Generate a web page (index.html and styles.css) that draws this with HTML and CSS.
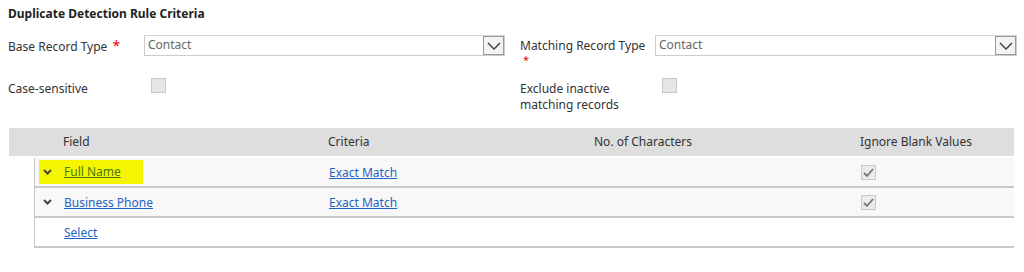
FILE: index.html
```html
<!DOCTYPE html>
<html lang="en">
<head>
  <meta charset="UTF-8">
  <title>Duplicate Detection Rule Criteria</title>
  <link rel="stylesheet" href="styles.css">
</head>
<body>
  <div class="page">
    <h2 class="title">Duplicate Detection Rule Criteria</h2>

    <div class="form-grid">
      <div class="field-label">Base Record Type <span class="req">*</span></div>
      <div class="select-box">
        <span class="select-value">Contact</span>
        <span class="select-btn">
          <svg width="14" height="8" viewBox="0 0 14 8"><path d="M1 1 L7 7 L13 1" fill="none" stroke="#444" stroke-width="1.5"/></svg>
        </span>
      </div>
      <div class="field-label right">Matching Record Type<span class="req req-below">*</span></div>
      <div class="select-box">
        <span class="select-value">Contact</span>
        <span class="select-btn">
          <svg width="14" height="8" viewBox="0 0 14 8"><path d="M1 1 L7 7 L13 1" fill="none" stroke="#444" stroke-width="1.5"/></svg>
        </span>
      </div>

      <div class="field-label">Case-sensitive</div>
      <div class="check-cell"><span class="checkbox"></span></div>
      <div class="field-label right">Exclude inactive<br>matching records</div>
      <div class="check-cell"><span class="checkbox"></span></div>
    </div>

    <div class="grid">
      <div class="grid-head">
        <div></div>
        <div>Field</div>
        <div>Criteria</div>
        <div>No. of Characters</div>
        <div>Ignore Blank Values</div>
      </div>
      <div class="grid-row">
        <div class="chev"><svg width="9" height="6" viewBox="0 0 9 6"><path d="M1 1 L4.5 4.5 L8 1" fill="none" stroke="#444" stroke-width="2"/></svg></div>
        <div><a href="#" class="link highlight">Full Name</a></div>
        <div><a href="#" class="link">Exact Match</a></div>
        <div></div>
        <div><span class="checkbox checked"><svg width="11" height="9" viewBox="0 0 11 9"><path d="M1 5 L4 8 L10 1" fill="none" stroke="#777" stroke-width="1.8"/></svg></span></div>
      </div>
      <div class="grid-row">
        <div class="chev"><svg width="9" height="6" viewBox="0 0 9 6"><path d="M1 1 L4.5 4.5 L8 1" fill="none" stroke="#444" stroke-width="2"/></svg></div>
        <div><a href="#" class="link">Business Phone</a></div>
        <div><a href="#" class="link">Exact Match</a></div>
        <div></div>
        <div><span class="checkbox checked"><svg width="11" height="9" viewBox="0 0 11 9"><path d="M1 5 L4 8 L10 1" fill="none" stroke="#777" stroke-width="1.8"/></svg></span></div>
      </div>
      <div class="grid-row last">
        <div></div>
        <div><a href="#" class="link">Select</a></div>
        <div></div>
        <div></div>
        <div></div>
      </div>
    </div>
  </div>
</body>
</html>
```

FILE: styles.css
```css
body {
  margin: 0;
  padding: 0;
  font-family: "Noto Sans", "Open Sans", sans-serif;
  font-size: 12px;
  color: #333;
  background-color: white;
}
.page {
  padding: 5px 7px 0 8px;
}
.title {
  font-size: 12px;
  font-weight: bold;
  color: #222;
  margin: 0 0 13px 0;
  line-height: 17px;
}
.form-grid {
  display: grid;
  grid-template-columns: 136px 361px 15px 135px 362px;
  grid-template-rows: 43px 50px;
}
.form-grid .field-label.right {
  grid-column: 4;
}
.form-grid .select-box:nth-child(4) {
  grid-column: 5;
}
.form-grid .check-cell:last-child {
  grid-column: 5;
}
.field-label {
  line-height: 16px;
  padding-top: 3px;
  color: #333;
}
.req {
  color: #e00;
  font-size: 14px;
  margin-left: 2px;
}
.req-below {
  display: block;
  font-size: 11px;
  line-height: 12px;
  margin-left: 3px;
}
.select-box {
  display: flex;
  border: 1px solid #ccc;
  border-top-color: #d6d6d6;
  background-color: white;
  box-sizing: border-box;
  height: 21px;
}
.select-value {
  flex: 1;
  color: #666;
  padding-left: 3px;
  line-height: 18px;
}
.select-btn {
  width: 21px;
  height: 19px;
  box-sizing: border-box;
  border: 1px solid #999;
  background-color: #f4f4f4;
  display: flex;
  align-items: center;
  justify-content: center;
}
.check-cell {
  padding: 0 0 0 7px;
}
.checkbox {
  display: inline-flex;
  align-items: center;
  justify-content: center;
  width: 15px;
  height: 15px;
  box-sizing: border-box;
  border: 1px solid #c8c8c8;
  background-color: #e6e6e6;
}
.checkbox.checked {
  background-color: #ebebeb;
}
.grid {
  margin: 0 3px 0 1px;
}
.grid-head {
  display: grid;
  grid-template-columns: 54px 265px 266px 266px 1fr;
  background-color: #dedede;
  height: 28px;
  line-height: 28px;
  color: #333;
}
.grid-row {
  display: grid;
  grid-template-columns: 29px 265px 266px 266px 1fr;
  margin-left: 25px;
  height: 30px;
  box-sizing: border-box;
  border-left: 1px solid #c6c6c6;
  border-bottom: 2px solid #c5cad1;
  background-color: #f8f8f8;
  align-items: center;
}
.grid-head + .grid-row {
  margin-top: 2px;
}
.grid-row.last {
  background-color: white;
}
.grid-row > div {
  height: 100%;
  display: flex;
  align-items: center;
}
.grid-row .chev {
  padding-left: 8px;
  position: relative;
  z-index: 1;
}
.link {
  color: #1f63c6;
  text-decoration: underline;
}
.highlight {
  background-color: #f5f500;
  color: #4a7a10;
  padding: 3px 22px 4px 25px;
  margin-left: -25px;
}
```
